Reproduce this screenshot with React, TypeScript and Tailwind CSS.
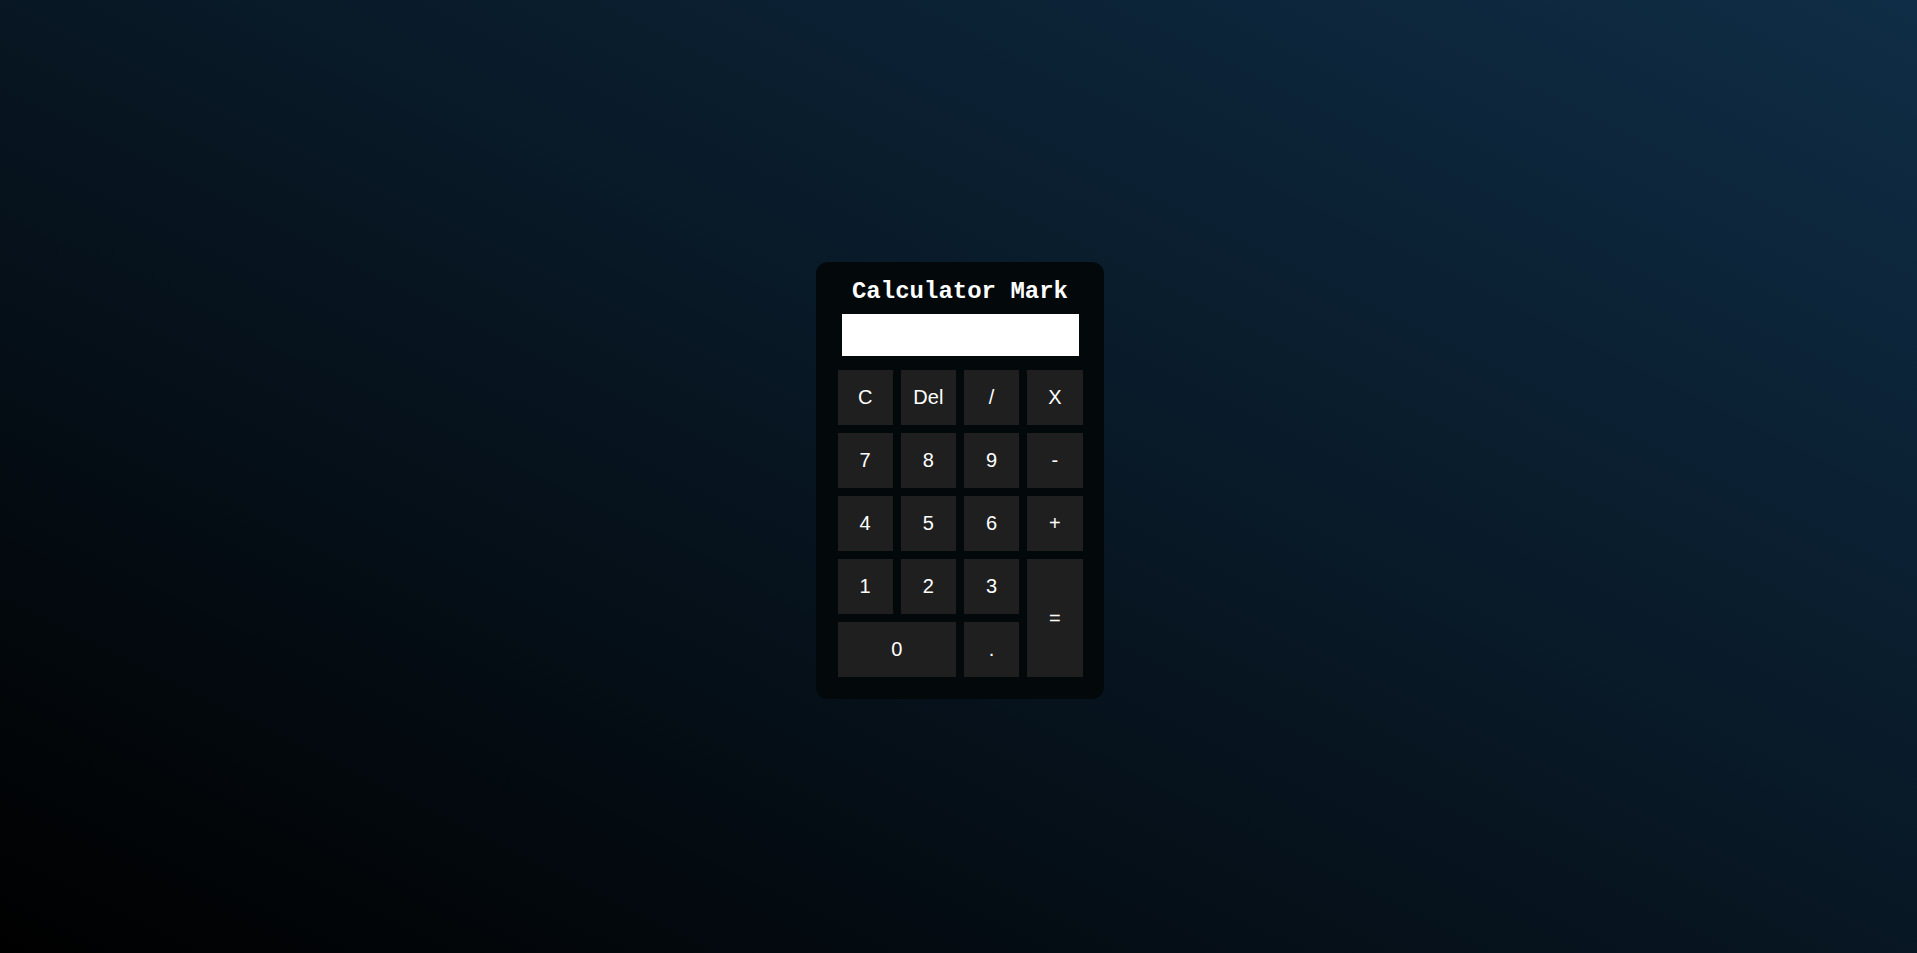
import React from "react";

type Key = { label: string; cls?: string };

const keys: Key[] = [
  { label: "C" },
  { label: "Del" },
  { label: "/" },
  { label: "X" },
  { label: "7" },
  { label: "8" },
  { label: "9" },
  { label: "-" },
  { label: "4" },
  { label: "5" },
  { label: "6" },
  { label: "+" },
  { label: "1" },
  { label: "2" },
  { label: "3" },
  { label: "=", cls: "row-span-2" },
  { label: "0", cls: "col-span-2" },
  { label: "." },
];

export default function App() {
  return (
    <div className="min-h-screen w-full flex items-center justify-center bg-[linear-gradient(to_top_right,#000000,#0f2d46)] pt-[7px] pl-[3px]">
      <div className="w-[288px] rounded-[12px] bg-[#03080b] pt-[16px] pb-[22px] px-[21px] flex flex-col items-center">
        <h1 className="text-[24px] leading-[28px] font-bold text-white font-['Liberation_Mono','Courier_New',monospace]">
          Calculator Mark
        </h1>
        <div className="mt-[8px] w-[237px] h-[42px] bg-white" />
        <div className="mt-[14px] w-[245px] grid grid-cols-4 auto-rows-[55px] gap-[8px]">
          {keys.map((k) => (
            <button
              key={k.label}
              className={`bg-[#1f1f1f] text-white text-[20px] flex items-center justify-center font-['Liberation_Sans',Arial,sans-serif] ${k.cls ?? ""}`}
            >
              {k.label}
            </button>
          ))}
        </div>
      </div>
    </div>
  );
}
